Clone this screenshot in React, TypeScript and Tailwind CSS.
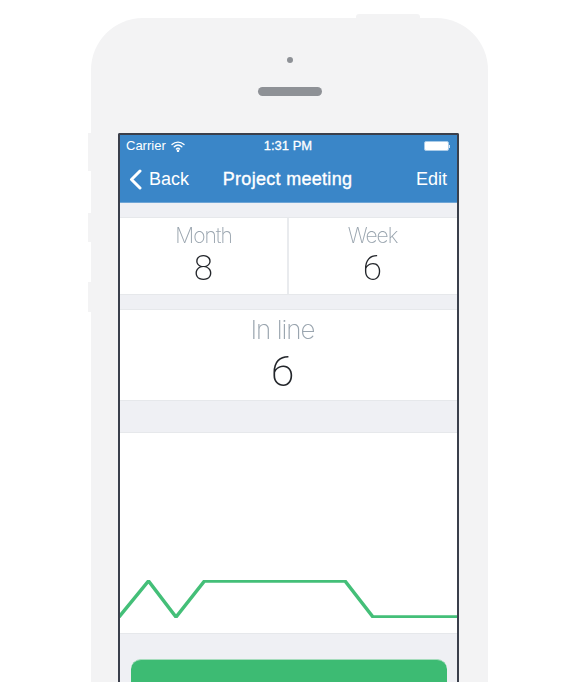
const pts = "-1,36 28.5,0 56,36 84.5,0 113,0 141,0 169,0 197,0 225,0 253,36 282,36 310,36 339,36";

function Stat({ label, value, big }: { label: string; value: string; big?: boolean }) {
  return (
    <div className="flex flex-col items-center transform-gpu">
      <div className={big ? "text-[26px] leading-[30px] mt-[5px] tracking-[-1px] text-[#9aa5af] font-extralight" : "text-[21px] leading-[24px] mt-[6px] tracking-[-1px] text-[#9aa5af] font-extralight"}>{label}</div>
      <div className={big ? "font-['Roboto',sans-serif] text-[43px] leading-[48px] mt-[2px] text-[#23262b] font-extralight" : "font-['Roboto',sans-serif] text-[35px] leading-[38px] mt-[2px] text-[#23262b] font-extralight"}>{value}</div>
    </div>
  );
}

export default function App() {
  return (
    <div className="relative w-[576px] h-[682px] overflow-hidden bg-white font-['Inter',sans-serif]">
      <div className="absolute left-[356px] top-[14px] w-[64px] h-[6px] rounded-t-[3px] bg-[#f3f3f4]" />
      <div className="absolute left-[88px] top-[133px] w-[5px] h-[38px] bg-[#f3f3f4]" />
      <div className="absolute left-[88px] top-[213px] w-[5px] h-[29px] bg-[#f3f3f4]" />
      <div className="absolute left-[88px] top-[282px] w-[5px] h-[30px] bg-[#f3f3f4]" />
      <div className="absolute left-[91px] top-[18px] w-[397px] h-[720px] rounded-t-[52px] bg-[#f3f3f4] flex flex-col items-center">
        <div className="mt-[39px] ml-[1px] w-[6px] h-[6px] rounded-full bg-[#8e9196]" />
        <div className="mt-[24px] ml-[1px] w-[64px] h-[9px] rounded-full bg-[#8e9196]" />
        <div className="mt-[37px] self-start ml-[27px] w-[341px] flex-1 border-x-2 border-t-2 border-[#3a3f4b] rounded-t-[2px] bg-[#eff0f4] flex flex-col">
          <div className="h-[68px] bg-[#3a86c8] border-b border-[#6fa5d6] text-white relative font-['Liberation_Sans',sans-serif] transform-gpu">
            <div className="h-[22px] flex items-center justify-between px-[6px] text-[13px]">
              <div className="flex items-center gap-[5px]">
                <span>Carrier</span>
                <svg width="14" height="11" viewBox="0 0 14 11" fill="none" stroke="white" strokeWidth="1.4" strokeLinecap="round">
                  <path d="M1 3.6 C4.5 .3 9.5 .3 13 3.6" />
                  <path d="M3.2 5.8 C5.5 3.6 8.5 3.6 10.8 5.8" />
                  <path d="M5.4 8 C6.3 7.1 7.7 7.1 8.6 8" />
                  <circle cx="7" cy="9.8" r=".6" fill="white" />
                </svg>
              </div>
              <div className="absolute left-0 right-0 top-[2px] flex justify-center text-[13px] leading-[18px] [-webkit-text-stroke:0.3px_white] pointer-events-none"><span className="-ml-[1px]">1:31 PM</span></div>
              <div className="flex items-center mr-[1px]">
                <div className="w-[25px] h-[10px] bg-white rounded-[2px] border border-[#a9cbe8]" />
                <div className="w-[1px] h-[3px] bg-[#cfe1f2]" />
              </div>
            </div>
            <div className="h-[45px] flex items-center justify-between pl-[9px] pr-[10px] text-[18px]">
              <div className="flex items-center gap-[7px]">
                <svg width="13" height="21" viewBox="0 0 13 21" fill="none" stroke="white" strokeWidth="3" strokeLinecap="round" strokeLinejoin="round"><path d="M11 2 L2.5 10.5 L11 19" /></svg>
                <span>Back</span>
              </div>
              <div className="absolute left-0 right-0 flex justify-center text-[18px] tracking-[0.3px] [-webkit-text-stroke:0.35px_white] pointer-events-none"><span className="-ml-[2px]">Project meeting</span></div>
              <span>Edit</span>
            </div>
          </div>
          <div className="mt-[14px] h-[78px] bg-white border-y border-[#e6e8eb] flex">
            <div className="w-[169px] border-r-2 border-[#e9ebee]"><Stat label="Month" value="8" /></div>
            <div className="flex-1 pr-[1px]"><Stat label="Week" value="6" /></div>
          </div>
          <div className="mt-[14px] h-[92px] bg-white border-y border-[#e6e8eb] pr-[12px]"><Stat big label="In line" value="6" /></div>
          <div className="mt-[31px] h-[202px] bg-white border-y border-[#e6e8eb] flex flex-col">
            <svg className="mt-[147px]" width="337" height="38" viewBox="0 -1 337 38" fill="none" stroke="#44bf78" strokeWidth="3.5"><polyline points={pts} /></svg>
          </div>
          <div className="mt-[25px] ml-[11px] mr-[10px] h-[60px] rounded-[10px] bg-[#3dbb73] border-t border-[#a5dcbc] text-center text-white text-[24px] leading-[28px] pt-[17px] font-['Liberation_Sans',sans-serif]">Start new meeting</div>
        </div>
      </div>
    </div>
  );
}
